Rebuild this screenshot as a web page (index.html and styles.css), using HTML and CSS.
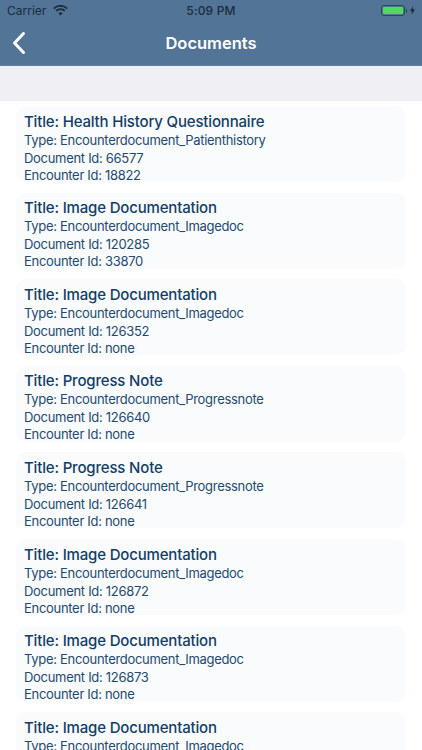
FILE: index.html
```html
<!DOCTYPE html>
<html lang="en">
<head>
<meta charset="utf-8">
<title>Documents</title>
<link rel="stylesheet" href="styles.css">
</head>
<body>
<header class="header">
  <div class="status">
    <div class="status-left">
      <span>Carrier</span>
      <svg class="wifi" viewBox="0 0 16 12" width="15" height="11"><path d="M8 11.5 5.7 9a3.3 3.3 0 0 1 4.6 0ZM3.9 7.2 2.6 5.8a7.7 7.7 0 0 1 10.8 0l-1.3 1.4a5.8 5.8 0 0 0-8.2 0ZM1.3 4.6 0 3.2a11.4 11.4 0 0 1 16 0l-1.3 1.4a9.6 9.6 0 0 0-13.4 0Z" fill="#1c2c3c"/></svg>
    </div>
    <div class="status-time">5:09 PM</div>
    <div class="status-right">
      <span class="battery"><span class="battery-fill"></span></span>
      <span class="battery-tip"></span>
      <svg class="bolt" viewBox="0 0 6 10" width="5" height="9"><path d="M3.6 0 0 5.6h2.3L1.8 10 6 3.9H3.4Z" fill="#1c2c3c"/></svg>
    </div>
  </div>
  <div class="nav">
    <svg class="back" viewBox="0 0 14 24" width="14" height="24"><path d="M11.5 2.5 2.5 12l9 9.5" fill="none" stroke="#fff" stroke-width="3" stroke-linecap="round" stroke-linejoin="round"/></svg>
    <h1 class="nav-title">Documents</h1>
  </div>
</header>
<div class="band"></div>
<main class="list">
  <article class="card"><h2>Title: Health History Questionnaire</h2><p class="type">Type: Encounterdocument_Patienthistory</p><p class="doc">Document Id: 66577</p><p>Encounter Id: 18822</p></article>
  <article class="card"><h2>Title: Image Documentation</h2><p class="type">Type: Encounterdocument_Imagedoc</p><p class="doc">Document Id: 120285</p><p>Encounter Id: 33870</p></article>
  <article class="card"><h2>Title: Image Documentation</h2><p class="type">Type: Encounterdocument_Imagedoc</p><p class="doc">Document Id: 126352</p><p>Encounter Id: none</p></article>
  <article class="card"><h2>Title: Progress Note</h2><p class="type">Type: Encounterdocument_Progressnote</p><p class="doc">Document Id: 126640</p><p>Encounter Id: none</p></article>
  <article class="card"><h2>Title: Progress Note</h2><p class="type">Type: Encounterdocument_Progressnote</p><p class="doc">Document Id: 126641</p><p>Encounter Id: none</p></article>
  <article class="card"><h2>Title: Image Documentation</h2><p class="type">Type: Encounterdocument_Imagedoc</p><p class="doc">Document Id: 126872</p><p>Encounter Id: none</p></article>
  <article class="card"><h2>Title: Image Documentation</h2><p class="type">Type: Encounterdocument_Imagedoc</p><p class="doc">Document Id: 126873</p><p>Encounter Id: none</p></article>
  <article class="card"><h2>Title: Image Documentation</h2><p class="type">Type: Encounterdocument_Imagedoc</p><p class="doc">Document Id: 126874</p><p>Encounter Id: none</p></article>
</main>
</body>
</html>
```
FILE: styles.css
```css
html, body {
  margin: 0;
  padding: 0;
  height: 750px;
  overflow: hidden;
  background: #fff;
  font-family: Inter, "Liberation Sans", Arial, sans-serif;
}
.header {
  height: 66px;
  box-sizing: border-box;
  background: #527496;
  border-bottom: 1px solid #5f7d9c;
}
.status {
  height: 21px;
  display: grid;
  grid-template-columns: 1fr auto 1fr;
  align-items: center;
  padding: 0 7px;
  font-size: 12px;
  color: #1c2c3c;
}
.status-left {
  display: flex;
  align-items: center;
  gap: 7px;
}
.status-time {
  font-weight: 500;
  letter-spacing: 0.15px;
}
.status-right {
  display: flex;
  align-items: center;
  justify-content: flex-end;
}
.battery {
  width: 24px;
  height: 11px;
  box-sizing: border-box;
  border: 1px solid #2b4a52;
  border-radius: 3px;
  padding: 1px;
  display: flex;
}
.battery-fill {
  flex: 1;
  background: #4cd964;
  border-radius: 1px;
}
.battery-tip {
  width: 1px;
  height: 4px;
  margin: 0 3px 0 1px;
  background: #2b4a52;
}
.nav {
  height: 44px;
  display: flex;
  align-items: center;
  justify-content: center;
  position: relative;
}
.back {
  position: absolute;
  left: 12px;
  top: 10px;
}
.nav-title {
  margin: 0;
  font-size: 16.5px;
  font-weight: 600;
  color: #fff;
}
.band {
  height: 35px;
  background: #efeff4;
}
.list {
  padding: 5px 16px 0;
  display: flex;
  flex-direction: column;
  gap: 10.6px;
}
.card {
  height: 76px;
  flex: none;
  box-sizing: border-box;
  padding: 5.6px 8px 0;
  background: #fafbfd;
  border-radius: 10px;
  color: #224a6e;
}
.card h2 {
  margin: 0;
  font-size: 15px;
  line-height: 19px;
  font-weight: 500;
  letter-spacing: -0.17px;
  color: #123e66;
}
.card p {
  margin: 0;
  font-size: 13px;
  line-height: 17px;
  letter-spacing: -0.3px;
}
.card .type {
  line-height: 18px;
}
.card .doc {
  margin-top: 1px;
}
```
